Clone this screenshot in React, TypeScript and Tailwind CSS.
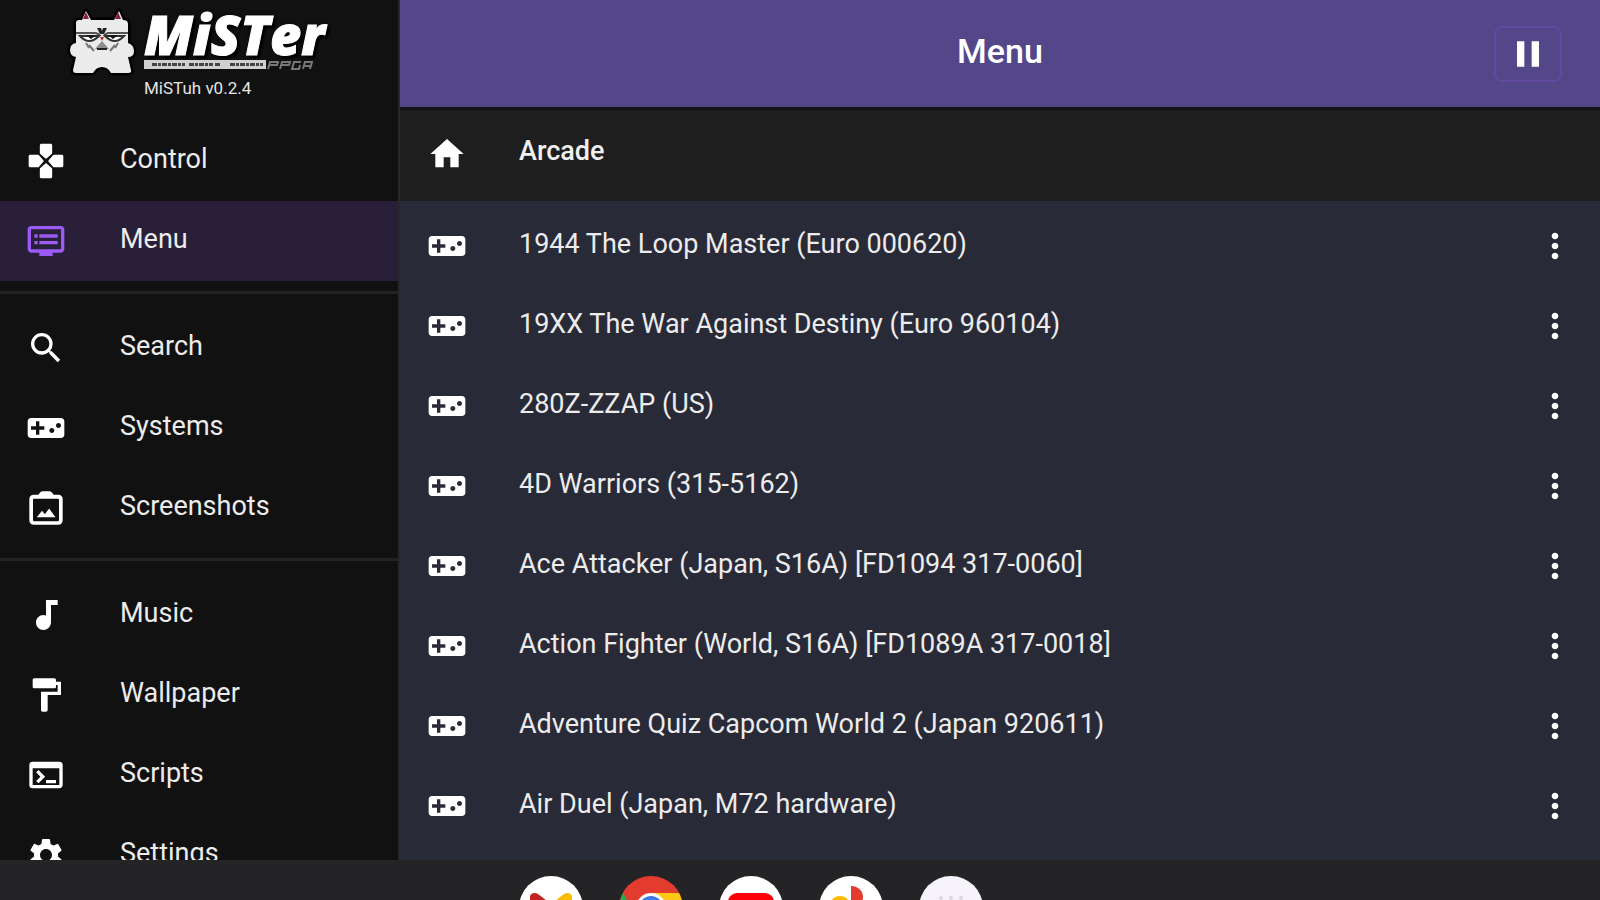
import type { ReactNode } from "react";
import type { IconType } from "react-icons";
import {
  MdAudiotrack,
  MdDvr,
  MdFormatPaint,
  MdHome,
  MdMoreVert,
  MdPause,
  MdSearch,
  MdSettings,
  MdTerminal,
  MdVideogameAsset,
} from "react-icons/md";

type IconProps = { className?: string };

function DPadIcon({ className }: IconProps) {
  return (
    <svg viewBox="0 0 24 24" fill="currentColor" className={className} aria-hidden="true">
      <path d="M9.200 1.600h5.600c.5 0 .9.4.9.9v4.600c0 .3-.1.5-.3.7L12.500 10.400c-.3.3-.7.3-1 0L8.600 7.800c-.2-.2-.3-.4-.3-.7V2.500c0-.5.4-.9.9-.9z" />
      <path d="M9.200 22.400h5.600c.5 0 .9-.4.9-.9v-4.600c0-.3-.1-.5-.3-.7l-2.900-2.600c-.3-.3-.7-.3-1 0l-2.900 2.600c-.2.2-.3.4-.3.7v4.600c0 .5.4.9.9.9z" />
      <path d="M1.600 9.200v5.600c0 .5.4.9.9.9h4.600c.3 0 .5-.1.7-.3l2.600-2.900c.3-.3.3-.7 0-1L7.800 8.600c-.2-.2-.4-.3-.7-.3H2.500c-.5 0-.9.4-.9.9z" />
      <path d="M22.400 9.200v5.600c0 .5-.4.9-.9.9h-4.600c-.3 0-.5-.1-.7-.3l-2.600-2.900c-.3-.3-.3-.7 0-1l2.600-2.900c.2-.2.4-.3.7-.3h4.600c.5 0 .9.4.9.9z" />
    </svg>
  );
}

function ScreenshotIcon({ className }: IconProps) {
  return (
    <svg viewBox="0 0 24 24" fill="currentColor" className={className} aria-hidden="true">
      <path
        fillRule="evenodd"
        d="M19.500 4h-2.900l-1.200-1.400A2 2 0 0 0 13.900 2h-3.800a2 2 0 0 0-1.500.6L7.400 4H4.500A2.500 2.500 0 0 0 2 6.500v13A2.500 2.500 0 0 0 4.500 22h15a2.500 2.500 0 0 0 2.500-2.500v-13A2.500 2.500 0 0 0 19.500 4zm.3 15.200a.8.8 0 0 1-.8.8H5a.8.8 0 0 1-.8-.8V7.300c0-.5.3-.8.8-.8h14c.5 0 .8.300.8.800zM6.500 17.500h11.200l-3.800-5.200-2.600 3.400-1.700-2.100z"
      />
    </svg>
  );
}

const navGroups: { label: string; icon: IconType | ((p: IconProps) => ReactNode); active?: boolean }[][] = [
  [
    { label: "Control", icon: DPadIcon },
    { label: "Menu", icon: MdDvr, active: true },
  ],
  [
    { label: "Search", icon: MdSearch },
    { label: "Systems", icon: MdVideogameAsset },
    { label: "Screenshots", icon: ScreenshotIcon },
  ],
  [
    { label: "Music", icon: MdAudiotrack },
    { label: "Wallpaper", icon: MdFormatPaint },
    { label: "Scripts", icon: MdTerminal },
    { label: "Settings", icon: MdSettings },
  ],
];

const games = [
  "1944 The Loop Master (Euro 000620)",
  "19XX The War Against Destiny (Euro 960104)",
  "280Z-ZZAP (US)",
  "4D Warriors (315-5162)",
  "Ace Attacker (Japan, S16A) [FD1094 317-0060]",
  "Action Fighter (World, S16A) [FD1089A 317-0018]",
  "Adventure Quiz Capcom World 2 (Japan 920611)",
  "Air Duel (Japan, M72 hardware)",
];

function CatMascot() {
  return (
    <svg viewBox="0 0 76 74" className="h-[74px] w-[76px] shrink-0" aria-hidden="true">
      <path
        d="M10 19q0-3 3-3h3l4-9 5 9h23l5-9 4 9q5 0 5 4v19q6 2 6 8t-6 6l3 13q1 3-3 3H45q-3-6-9-6t-9 6H10q-3 0-3-3l3-13q-6-1-6-7t6-7z"
        fill="#ebebeb"
        stroke="#000"
        strokeWidth="5"
        strokeLinejoin="round"
        paintOrder="stroke"
      />
      <path d="M20 8l3 7h-6zM52 8l3 7h-6z" fill="#8d2038" />
      <path d="M10 29h20l4 2M62 29H42l-4 2" fill="none" stroke="#555" strokeWidth="2" />
      <path d="M14 32q9 10 19 0zM58 32q-9 10-19 0z" fill="#fff" stroke="#333" strokeWidth="2" />
      <path d="M20 31h10l-5 4zM52 31H42l5 4z" fill="#151515" />
      <path d="M31 24h4l1 3 1-3h4l-3 6h-4z" fill="#222" />
      <path d="M34 33h4l-2 4z" fill="#b52a2a" />
      <path d="M36 37l7 8H29z" fill="#8d8d8d" />
      <path d="M31 44h10v2H31z" fill="#222" />
      <path d="M23 41l5 6M49 41l-5 6M20 39l3 5M52 39l-3 5" stroke="#777" strokeWidth="2" />
    </svg>
  );
}

function Brand() {
  return (
    <div className="flex h-[121px] shrink-0 gap-[2px] pt-1 pl-[66px]">
      <CatMascot />
      <div className="flex flex-col pt-1">
        <p className="font-['Open_Sans'] text-[54px] leading-[52px] font-extrabold text-white italic [-webkit-text-stroke:1px_#fff] [text-shadow:0_0_4px_#000,3px_3px_2px_#000]">
          MiSTer
        </p>
        <svg viewBox="0 0 170 10" className="h-[10px] w-[170px]" aria-hidden="true">
          <rect width="122" height="9" fill="#d0d0d0" />
          <path d="M8 4.500h33M45 4.500h24M71 4.500h5M86 4.500h33" stroke="#444" strokeWidth="3" strokeDasharray="5 1 3 1" />
          <path d="M124 9l2-7h8l-1 3h-7M136 9l2-7h8l-1 3h-7M157 2h-7l-2 7h7l1-4M159 9l2-7h7l-2 7M161 6h5" fill="none" stroke="#777" strokeWidth="2" />
        </svg>
        <p className="mt-2 text-[17px] leading-5 text-[#e4e4e4]">MiSTuh v0.2.4</p>
      </div>
    </div>
  );
}

function Sidebar() {
  return (
    <aside className="flex w-1/4 shrink-0 flex-col overflow-hidden border-r-2 border-[#262829] bg-[#111111]">
      <Brand />
      <nav className="shrink-0">
        {navGroups.map((group, i) => (
          <ul key={i} className={i > 0 ? "mt-[10px] border-t-3 border-[#232323] pt-[14px]" : ""}>
            {group.map(({ label, icon: Icon, active }) => (
              <li key={label}>
                <a
                  href="#"
                  aria-current={active ? "page" : undefined}
                  className={
                    active
                      ? "flex h-20 items-center gap-[54px] bg-[#291f38] pl-[26px]"
                      : "flex h-20 items-center gap-[54px] pl-[26px]"
                  }
                >
                  <Icon className={active ? "size-10 text-[#9a5cf5]" : "size-10 text-white"} />
                  <span className="pb-1 text-[27px] text-[#ececec]">{label}</span>
                </a>
              </li>
            ))}
          </ul>
        ))}
      </nav>
    </aside>
  );
}

function Header() {
  return (
    <header className="grid h-[107px] shrink-0 grid-cols-[1fr_auto_1fr] items-center bg-[#53478a] px-[38px]">
      <h1 className="col-start-2 pb-1 text-[34px] font-medium text-white">Menu</h1>
      <button
        type="button"
        aria-label="Pause"
        className="flex h-14 w-[68px] items-center justify-center justify-self-end rounded-lg border-2 border-[#6249a0] text-white"
      >
        <MdPause className="size-11" />
      </button>
    </header>
  );
}

function GameList() {
  return (
    <ul className="min-h-0 flex-1 overflow-hidden pt-[5px]">
      {games.map((name) => (
        <li key={name} className="flex h-20 items-center pr-[25px] pl-[27px]">
          <MdVideogameAsset className="size-10 shrink-0 text-white" />
          <span className="ml-[52px] flex-1 pb-1 text-[27px] text-[#ececec]">{name}</span>
          <button type="button" aria-label={"Options for " + name} className="text-white">
            <MdMoreVert className="size-10" />
          </button>
        </li>
      ))}
    </ul>
  );
}

function Dock() {
  const tile = "size-16 shrink-0 rounded-full";
  return (
    <footer className="flex h-10 shrink-0 justify-center gap-9 overflow-hidden bg-[#242427] pt-4 pr-[98px]">
      <button type="button" aria-label="Gmail" className={tile}>
        <svg viewBox="0 0 64 64" className="size-16">
          <circle cx="32" cy="32" r="32" fill="#fff" />
          <path d="M11 21c0-4 5-5 8-3l13 10-6 8-15-11z" fill="#c5221f" />
          <path d="M53 21c0-4-5-5-8-3L32 28l6 8 15-11z" fill="#fbbc04" />
        </svg>
      </button>
      <button type="button" aria-label="Chrome" className={tile}>
        <svg viewBox="0 0 64 64" className="size-16">
          <circle cx="32" cy="32" r="32" fill="#e33b2e" />
          <path d="M0 32C0 26 2 21 4 17l14 23 14 24A32 32 0 0 1 0 32z" fill="#2da94f" />
          <path d="M32 17h28a32 32 0 0 1-28 47z" fill="#fdc912" />
          <circle cx="32" cy="32" r="15" fill="#fff" />
          <circle cx="32" cy="32" r="12" fill="#3c79e6" />
        </svg>
      </button>
      <button type="button" aria-label="YouTube" className={tile}>
        <svg viewBox="0 0 64 64" className="size-16">
          <circle cx="32" cy="32" r="32" fill="#fff" />
          <rect x="9" y="17" width="46" height="32" rx="9" fill="#fb0007" />
          <path d="M27 26l12 7-12 7z" fill="#fff" />
        </svg>
      </button>
      <button type="button" aria-label="Photos" className={tile}>
        <svg viewBox="0 0 64 64" className="size-16">
          <circle cx="32" cy="32" r="32" fill="#fff" />
          <path d="M32 10c8 0 12 6 12 11s-4 11-12 11z" fill="#e33b2e" />
          <path d="M10 32c0-7 5-12 11-12s11 5 11 12z" fill="#fbbc04" />
          <path d="M54 32c0 7-5 12-11 12s-11-5-11-12z" fill="#3c79e6" />
          <path d="M32 54c-7 0-12-5-12-11s5-11 12-11z" fill="#2da94f" />
        </svg>
      </button>
      <button type="button" aria-label="All apps" className={tile}>
        <svg viewBox="0 0 64 64" className="size-16">
          <circle cx="32" cy="32" r="32" fill="#f6f3fa" />
          <path d="M22 22h.01M32 22h.01M42 22h.01M22 32h.01M32 32h.01M42 32h.01M22 42h.01M32 42h.01M42 42h.01" stroke="#dbd9df" strokeWidth="4" strokeLinecap="round" />
        </svg>
      </button>
    </footer>
  );
}

export default function App() {
  return (
    <div className="flex h-screen flex-col bg-[#111111] font-[Roboto,sans-serif]">
      <div className="flex min-h-0 flex-1">
        <Sidebar />
        <main className="flex min-w-0 flex-1 flex-col bg-[#292a37]">
          <Header />
          <div className="flex h-[94px] shrink-0 items-center border-t-3 border-[#141414] bg-[#1e1e1e] pb-1 pl-[27px]">
            <a href="#" aria-label="Home" className="text-white">
              <MdHome className="size-10" />
            </a>
            <h2 className="ml-[52px] pb-1 text-[27px] font-medium text-[#f0f0f0]">Arcade</h2>
          </div>
          <GameList />
        </main>
      </div>
      <Dock />
    </div>
  );
}
